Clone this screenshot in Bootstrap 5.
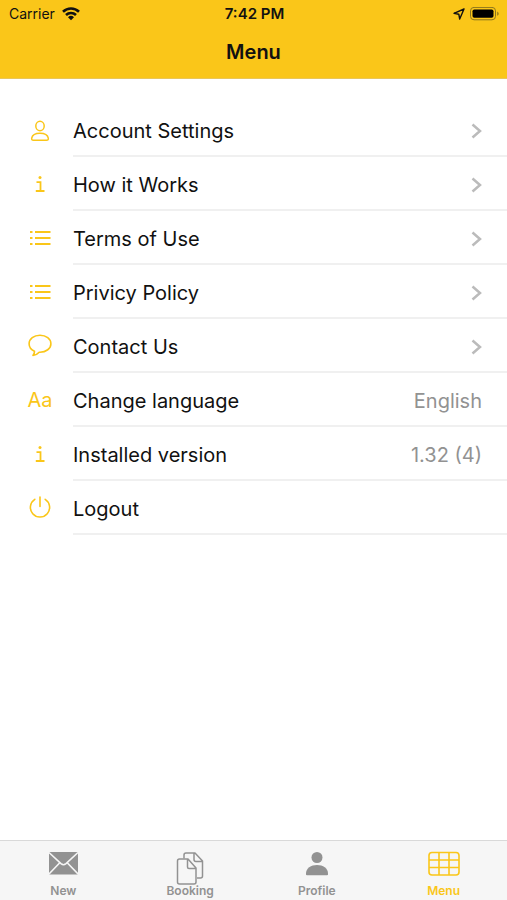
<!DOCTYPE html>
<html lang="en">
<head>
<meta charset="utf-8">
<meta name="viewport" content="width=device-width, initial-scale=1">
<title>Menu</title>
<link href="https://cdn.jsdelivr.net/npm/bootstrap@5.3.0/dist/css/bootstrap.min.css" rel="stylesheet">
<style>
  :root { --brand: #fac619; --muted: #929292; }
  body { font-family: Inter, "Liberation Sans", sans-serif; color: #111; background: #fff; }
  svg { display: block; fill: none; stroke: currentColor; }
  .app-header { background: var(--brand); color: #111; border-bottom: 1px solid #e9c65a; }
  .status-bar { font-size: 14px; line-height: 16px; padding: 6px 7px 0 9px; }
  .status-side { flex: 1 1 0; }
  .status-left { gap: 7px; }
  .status-time { font-size: 15px; }
  .app-title { font-size: 20px; line-height: 24px; font-weight: 600; padding: 18px 0 14px; }
  .menu-item { height: 54px; color: #111; font-size: 20px; line-height: 24px; background: none; }
  .menu-icon { width: 73px; padding-left: 7px; color: var(--brand); }
  .menu-body { border-bottom: 2px solid #f0f0f0; padding-right: 25px; padding-top: 4px; }
  .menu-value { color: var(--muted); }
  .menu-chevron { color: #bbb; }
  .tab-bar { background: #f6f6f6; border-top: 1px solid #d9d9d9; height: 60px; }
  .tab-link { color: var(--muted); font-size: 12px; line-height: 14px; font-weight: 600; padding-bottom: 2px; }
  .tab-link.active { color: var(--brand); }
  .tab-icon { height: 36px; margin-top: 5px; }
</style>
<script src="https://cdn.jsdelivr.net/npm/bootstrap@5.3.0/dist/js/bootstrap.bundle.min.js" defer></script>
</head>
<body class="d-flex flex-column min-vh-100">
<header class="app-header">
  <div class="status-bar d-flex align-items-center">
    <div class="status-side status-left d-flex align-items-center">
      <span>Carrier</span>
      <svg width="18" height="14" viewBox="0 0 18 14" stroke-width="2.600" aria-label="Wi-Fi"><path d="M1 4.700a11.500 11.500 0 0 1 16 0M4 8a7.200 7.200 0 0 1 10 0"/><path d="M9 13.200l-3-3a4.300 4.300 0 0 1 6 0z" fill="currentColor" stroke="none"/></svg>
    </div>
    <span class="status-time fw-semibold">7:42 PM</span>
    <div class="status-side d-flex align-items-center justify-content-end gap-1">
      <svg width="12" height="12" viewBox="0 0 12 12" stroke-width="1.400" stroke-linejoin="round" aria-label="Location"><path d="M11 1L1 5.300l4.800.9L6.700 11z"/></svg>
      <svg width="31" height="14" viewBox="0 0 31 14" aria-label="Battery full"><rect x="1.500" y=".4" width="25" height="12.400" rx="3.500" stroke="#8b751e"/><rect x="3.500" y="2.400" width="21" height="8.400" rx="1.800" fill="#000" stroke="none"/><path d="M28.200 4.400c2 .8 2 3.600 0 4.400z" fill="#8b751e" stroke="none"/></svg>
    </div>
  </div>
  <h1 class="app-title text-center m-0">Menu</h1>
</header>

<main class="flex-grow-1 pt-4">
  <ul class="list-unstyled m-0">
    <li><a href="#account" class="menu-item d-flex text-decoration-none">
      <span class="menu-icon d-flex flex-shrink-0 align-items-center justify-content-center"><svg width="20" height="22" viewBox="0 0 20 22" stroke-width="1.500"><ellipse cx="10" cy="7" rx="4.200" ry="4.700"/><path d="M3.500 21.200c-1.500 0-2-.8-1.800-2 .5-2.700 3.500-4.900 8.300-4.900s7.800 2.200 8.300 4.900c.2 1.200-.3 2-1.800 2z"/></svg></span>
      <span class="menu-body d-flex flex-grow-1 align-items-center justify-content-between"><span>Account Settings</span><svg class="menu-chevron" width="11" height="16" viewBox="0 0 11 16" stroke-width="2.500"><path d="M1.500 1.500L9 8l-7.500 6.500"/></svg></span></a></li>
    <li><a href="#how" class="menu-item d-flex text-decoration-none">
      <span class="menu-icon d-flex flex-shrink-0 align-items-center justify-content-center"><svg width="10" height="18" viewBox="0 0 10 18" stroke-width="1.800"><path d="M1.500 7.200h4v8.800M.8 16h8.700"/><circle cx="5" cy="2.500" r="1.500" fill="currentColor" stroke="none"/></svg></span>
      <span class="menu-body d-flex flex-grow-1 align-items-center justify-content-between"><span>How it Works</span><svg class="menu-chevron" width="11" height="16" viewBox="0 0 11 16" stroke-width="2.500"><path d="M1.500 1.500L9 8l-7.500 6.500"/></svg></span></a></li>
    <li><a href="#terms" class="menu-item d-flex text-decoration-none">
      <span class="menu-icon d-flex flex-shrink-0 align-items-center justify-content-center"><svg width="22" height="16" viewBox="0 0 22 16" stroke-width="1.800"><path d="M6 2h15.500M6 8h15.500M6 14h15.500M1 2h2.500M1 8h2.500M1 14h2.500"/></svg></span>
      <span class="menu-body d-flex flex-grow-1 align-items-center justify-content-between"><span>Terms of Use</span><svg class="menu-chevron" width="11" height="16" viewBox="0 0 11 16" stroke-width="2.500"><path d="M1.500 1.500L9 8l-7.500 6.500"/></svg></span></a></li>
    <li><a href="#privacy" class="menu-item d-flex text-decoration-none">
      <span class="menu-icon d-flex flex-shrink-0 align-items-center justify-content-center"><svg width="22" height="16" viewBox="0 0 22 16" stroke-width="1.800"><path d="M6 2h15.500M6 8h15.500M6 14h15.500M1 2h2.500M1 8h2.500M1 14h2.500"/></svg></span>
      <span class="menu-body d-flex flex-grow-1 align-items-center justify-content-between"><span>Privicy Policy</span><svg class="menu-chevron" width="11" height="16" viewBox="0 0 11 16" stroke-width="2.500"><path d="M1.500 1.500L9 8l-7.500 6.500"/></svg></span></a></li>
    <li><a href="#contact" class="menu-item d-flex text-decoration-none">
      <span class="menu-icon d-flex flex-shrink-0 align-items-center justify-content-center"><svg width="24" height="24" viewBox="0 0 24 24" stroke-width="1.600" stroke-linejoin="round"><path d="M6.500 17.300C3 15.700 1.100 12.900 1.100 9.700 1.100 4.900 5.900 1.300 12 1.300s10.900 3.600 10.900 8.400-4.800 8.500-10.900 8.500h-.8c-1.600 1.800-3.900 3-6.200 3.200 1-1.100 1.600-2.500 1.500-4.100z"/></svg></span>
      <span class="menu-body d-flex flex-grow-1 align-items-center justify-content-between"><span>Contact Us</span><svg class="menu-chevron" width="11" height="16" viewBox="0 0 11 16" stroke-width="2.500"><path d="M1.500 1.500L9 8l-7.500 6.500"/></svg></span></a></li>
    <li><button type="button" class="menu-item d-flex w-100 border-0 p-0 text-start">
      <span class="menu-icon align-self-stretch d-flex flex-shrink-0 align-items-center justify-content-center" aria-hidden="true">Aa</span>
      <span class="menu-body align-self-stretch d-flex flex-grow-1 align-items-center justify-content-between"><span>Change language</span><span class="menu-value">English</span></span></button></li>
    <li class="menu-item d-flex">
      <span class="menu-icon d-flex flex-shrink-0 align-items-center justify-content-center"><svg width="10" height="18" viewBox="0 0 10 18" stroke-width="1.800"><path d="M1.500 7.200h4v8.800M.8 16h8.700"/><circle cx="5" cy="2.500" r="1.500" fill="currentColor" stroke="none"/></svg></span>
      <span class="menu-body d-flex flex-grow-1 align-items-center justify-content-between"><span>Installed version</span><span class="menu-value">1.32 (4)</span></span></li>
    <li><button type="button" class="menu-item d-flex w-100 border-0 p-0 text-start">
      <span class="menu-icon align-self-stretch d-flex flex-shrink-0 align-items-center justify-content-center"><svg width="22" height="24" viewBox="0 0 22 24" stroke-width="1.600" stroke-linecap="round"><path d="M11 1v9.500M5.800 3.300a9.600 9.600 0 1 0 10.400 0"/></svg></span>
      <span class="menu-body align-self-stretch d-flex flex-grow-1 align-items-center">Logout</span></button></li>
  </ul>
</main>

<nav class="tab-bar sticky-bottom d-flex" aria-label="Main">
  <a href="#new" class="tab-link col d-flex flex-column justify-content-between align-items-center text-decoration-none">
    <span class="tab-icon"><svg width="30" height="34" viewBox="0 0 30 34"><rect x="1" y="6" width="29" height="22.500" rx="1" fill="currentColor" stroke="none"/><path d="M1 6.500l12 11.200q2.500 2 5 0L30 6.500M1 28l10.800-11.300M30 28L19.200 16.700" stroke="#f6f6f6" stroke-width="1.600"/></svg></span>
    <span>New</span></a>
  <a href="#booking" class="tab-link col d-flex flex-column justify-content-between align-items-center text-decoration-none">
    <span class="tab-icon"><svg width="28" height="40" viewBox="0 0 28 40" stroke-width="1.500" stroke-linejoin="round"><path d="M8 12.500V9q0-2 2-2h9l7.500 8v15q0 2-2 2H21M18 7v6.500q0 2 2 2h6.500"/><path d="M3.500 13h8.500l8 9V36q0 2-2 2H3.500q-2 0-2-2V15q0-2 2-2zM11.500 13v8q0 1.500 1.500 1.500h7"/></svg></span>
    <span>Booking</span></a>
  <a href="#profile" class="tab-link col d-flex flex-column justify-content-between align-items-center text-decoration-none">
    <span class="tab-icon"><svg width="24" height="34" viewBox="0 0 24 34"><g fill="currentColor" stroke="none"><circle cx="12" cy="11.500" r="5.500"/><path d="M1 28.500v-1.200C1 22.500 6 19 12 19s11 3.500 11 8.300v1.200q0 .8-1 .8H2q-1 0-1-.8z"/></g></svg></span>
    <span>Profile</span></a>
  <a href="#menu" class="tab-link active col d-flex flex-column justify-content-between align-items-center text-decoration-none" aria-current="page">
    <span class="tab-icon"><svg width="32" height="34" viewBox="0 0 32 34" stroke-width="1.600"><rect x="1" y="6.500" width="30" height="22.500" rx="3"/><path d="M1 14h30M1 21.500h30M11 6.500V29M21 6.500V29"/></svg></span>
    <span>Menu</span></a>
</nav>
</body>
</html>
